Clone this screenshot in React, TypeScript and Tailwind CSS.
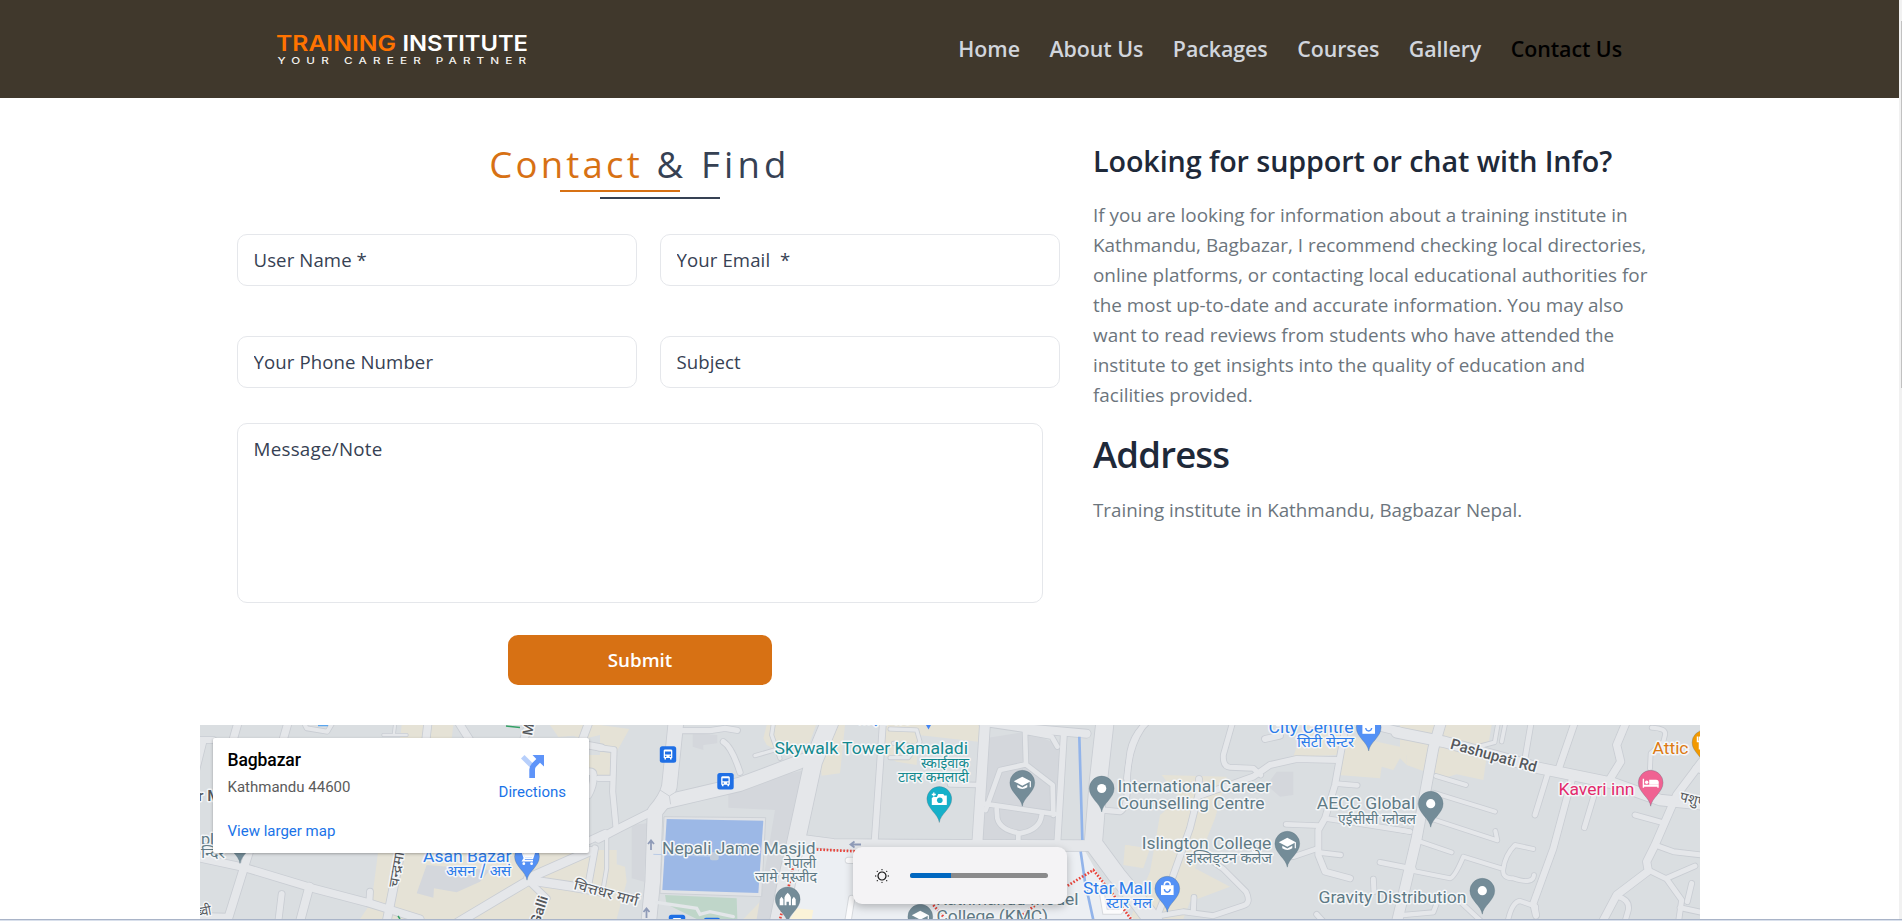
import React from "react";

type Road = [origin: number, d: string, width: number];

// Street geometry is stored per map tile, at three units to the pixel.
const roads: Road[] = [
  [200, "M0 75L40 75M10 80L-20 200", 18],
  [200, "M112 30L100 72M262 30L250 72M683 30L678 72M778 26L812 80M987 26L972 72M1165 26L1148 72", 22],
  [200, "M315 30L320 40L382 50L395 28", 12],
  [200, "M585 30L582 54M550 60L620 60", 7],
  [200, "M1150 88L1205 98M1155 172Q1180 165 1180 180Q1182 210 1165 240M1150 385L1215 355", 20],
  [200, "M-5 428L135 458L340 520L500 562L660 612", 22],
  [200, "M150 400L84 612M328 515L300 620M604 400L560 620", 24],
  [200, "M0 603L85 605M245 537L235 620M510 530L508 562", 18],
  [200, "M985 497L770 625M985 490L1170 408M985 495L1100 512L1210 530", 26],
  [200, "M985 497L1040 550M1185 400L1165 510", 18],
  [600, "M228 20L208 215Q200 250 165 290L158 500L146 625", 44],
  [600, "M190 262L300 236L420 208L600 140L650 125", 40],
  [600, "M-5 372L60 338L160 288", 22],
  [600, "M-5 98L42 104L38 230L48 335M-5 190L35 190", 16],
  [600, "M240 47L330 47L375 40L412 46M370 80Q395 95 420 172", 16],
  [600, "M520 26L515 60L540 130M465 122L540 100", 10],
  [600, "M690 20L640 140L588 380L560 500L535 625", 52],
  [600, "M849 20L824 380", 18],
  [600, "M590 374L700 388L900 390L1480 392", 32],
  [600, "M20 365L20 460L8 530", 10],
  [840, "M435 25L412 385", 30],
  [840, "M672 50L652 385", 18],
  [840, "M330 208L415 210M555 50L558 148L480 165L437 285M555 50L635 65L652 95M560 150L638 210L640 300M425 265L645 297M470 282L472 310Q480 345 540 355Q600 345 605 300M535 355L535 385", 14],
  [840, "M425 20L560 40L740 56", 24],
  [840, "M795 20L775 200L760 385L830 480L900 565L945 625", 52],
  [840, "M785 285L840 290Q865 280 862 190Q865 100 905 40", 16],
  [840, "M150 42L230 45L240 80L205 128L150 128M160 85L215 92", 10],
  [1080, "M198 25Q160 60 150 110L140 190", 16],
  [1080, "M457 25L430 120Q428 155 450 157L520 160L542 180", 15],
  [1080, "M365 240L520 185L570 150L650 132L775 135", 18],
  [1080, "M357 192L355 240L330 340L280 480L225 620M555 72L600 62", 18],
  [1080, "M792 60L765 210L735 310L715 345L715 420L735 470L810 490", 18],
  [1080, "M770 206L832 211M618 328L718 332M640 425L715 400M715 412L782 420M735 310L800 320L990 350", 14],
  [1080, "M370 420L430 462L498 530Q515 565 490 572L400 602L310 590L220 605M342 547L340 590", 15],
  [1080, "M900 442L1000 462M880 492L882 530M710 598L730 620", 15],
  [1080, "M880 30L960 50", 24],
  [1400, "M-10 52L130 80L420 160L640 205L780 255L905 268", 32],
  [1400, "M122 25L100 100L50 370L10 540L-10 625", 30],
  [1400, "M294 25L284 82L235 95M316 25L305 80", 11],
  [1400, "M393 25L375 130M442 180L405 300M590 215L553 338", 15],
  [1400, "M525 20L475 165M515 195L460 400L400 565L408 600", 19],
  [1400, "M677 25L650 90L662 140L628 195", 22],
  [1400, "M755 38Q800 40 795 60L790 80L752 115L750 160", 12],
  [1400, "M905 140L830 240L765 390L740 440L745 468L650 540L605 625", 22],
  [1400, "M885 160L905 168M705 300L785 322M765 390L820 410L905 420M745 465L800 492L845 555L835 625M800 490L885 453M875 505L862 560M840 578L905 592M655 545Q690 555 685 585L675 620", 15],
  [1400, "M108 183L198 210M100 233L285 290M90 310L292 376L286 348M55 378L155 412M25 465L150 490Q165 485 190 425L310 462Q315 420 345 390L400 402M310 462Q305 490 340 490Q400 510 402 480", 12],
  [1400, "M322 625Q335 560 360 558L408 575L408 605M170 550L250 625M10 600L100 592L112 560M-10 343L30 350", 13],
];

const beige: [number, string][] = [
  [200, "M605 30H760L755 72H600ZM1050 30H1200V60L1150 72L1120 62L1075 66ZM1160 120H1200V185L1160 165Z"],
  [200, "M535 405L515 560L480 612H1250V405Z"],
  [600, "M0 30L88 42L50 110L0 90ZM0 110L40 115L30 180L0 180ZM25 440L75 455L80 500L50 612L0 612V470Z"],
  [600, "M500 30H648L630 80L560 120L500 90L490 70ZM700 30H735L720 175L665 182L660 130ZM520 340L500 540L430 612H540Z"],
  [840, "M130 30H420L415 80L235 60L230 150L170 140L130 120ZM0 30H10L0 160ZM860 390L910 400V455L855 445Z"],
  [1080, "M245 180L440 185L405 310L345 460L450 515L330 560L310 612H150L210 470L240 300L300 250ZM135 390L210 400L190 460L130 450Z"],
  [1080, "M670 30H800L770 120L640 125ZM800 60L980 100V150L960 130L940 165L905 155L900 190L775 180Z"],
  [1400, "M0 30H275L265 90L250 195L170 178L130 190L20 150V120L0 120Z"],
];

const shade: [number, string][] = [
  [200, "M680 450L870 465L840 500L770 532L702 520L700 548L650 535Z"],
  [600, "M385 215L640 160L610 300L520 612H470L525 285L385 278ZM278 55L352 60V85L310 90V105L278 95ZM95 330L142 325L132 500L95 490Z"],
  [840, "M435 70L560 50L660 90L650 380H420Z"],
  [1080, "M590 170H640V240L600 245L560 210Z"],
];

const DEVA = "'Noto Sans Devanagari','Noto Sans','Lohit Devanagari',sans-serif";

type Label = {
  t: string; x: number; y: number; w: number; c: string;
  s?: number; r?: number; deva?: boolean; bold?: boolean;
};
const slate = "#5f7a85";
const teal = "#13898e";
const blue = "#2b7bea";
const gray = "#55585c";
const labels: Label[] = [
  { t: "Skywalk Tower Kamaladi", x: 774.5, y: 753.7, w: 193.5, c: teal },
  { t: "स्काईवाक", x: 921, y: 767.5, w: 48, c: teal, deva: true },
  { t: "टावर कमलादी", x: 898, y: 781.5, w: 71, c: teal, deva: true },
  { t: "Nepali Jame Masjid", x: 662, y: 854.3, w: 153.5, c: slate },
  { t: "नेपाली", x: 784, y: 868, w: 32, c: slate, deva: true },
  { t: "जामे मस्जीद", x: 755, y: 882, w: 62, c: slate, deva: true },
  { t: "International Career", x: 1117.5, y: 791.7, w: 153.5, c: slate },
  { t: "Counselling Centre", x: 1117.5, y: 809.3, w: 147, c: slate },
  { t: "City Centre", x: 1268.5, y: 732.7, w: 85, c: blue },
  { t: "सिटी सेन्टर", x: 1297, y: 746.5, w: 57, c: blue, deva: true },
  { t: "AECC Global", x: 1316.7, y: 809.3, w: 98.5, c: slate },
  { t: "एईसीसी ग्लोबल", x: 1338, y: 823.5, w: 78, c: slate, deva: true },
  { t: "Islington College", x: 1141.8, y: 849, w: 129.5, c: slate },
  { t: "इस्लिङ्टन कलेज", x: 1186, y: 862.7, w: 86, c: slate, deva: true },
  { t: "Star Mall", x: 1083, y: 894, w: 68.7, c: blue },
  { t: "स्टार मल", x: 1106, y: 908, w: 46, c: blue, deva: true },
  { t: "Gravity Distribution", x: 1318.5, y: 902.7, w: 148, c: slate },
  { t: "Attic", x: 1652.5, y: 753.7, w: 36, c: "#dd7a12" },
  { t: "Kaveri inn", x: 1558.5, y: 795, w: 76, c: "#e32a6c" },
  { t: "Asan Bazar", x: 423, y: 861.7, w: 88.5, c: blue },
  { t: "असन / असं", x: 446, y: 875.5, w: 65, c: blue, deva: true },
  { t: "Kathmandu Model", x: 936, y: 905.3, w: 142.5, c: slate },
  { t: "College (KMC)", x: 936.5, y: 922.3, w: 111.5, c: slate },
  { t: "pl", x: 201, y: 844.5, w: 13, c: slate },
  { t: "न्दिर", x: 201, y: 858, w: 24, c: slate, deva: true },
  { t: "साइनबोर्ड", x: 855, y: 724, w: 57, c: blue, deva: true },
  { t: "r M", x: 198, y: 801, w: 23, c: gray, s: 15, bold: true },
  { t: "M", x: 532, y: 736, w: 12, c: gray, s: 14, r: -80, bold: true },
  { t: "Pashupati Rd", x: 1449.5, y: 748.5, w: 89, c: gray, s: 15, r: 15.5, bold: true },
  { t: "पशुपति", x: 1679, y: 801, w: 38, c: gray, s: 14, r: 14, deva: true },
  { t: "चित्तधर मार्ग", x: 573, y: 889, w: 66, c: gray, s: 14, r: 15, deva: true },
  { t: "चन्द्रमा", x: 398, y: 888, w: 36, c: gray, s: 14, r: -80, deva: true },
  { t: "Galli", x: 539, y: 926, w: 30, c: gray, s: 14, r: -72, bold: true },
  { t: "ब्वी", x: 198, y: 917, w: 14, c: gray, s: 14, r: -10, deva: true },
];

const pinGray = "#748c98";
type Kind = "dot" | "grad" | "camera" | "bag" | "bed" | "cart" | "mosque" | "fork";
const pins: [number, number, string, Kind][] = [
  [939.3, 799, "#16b0c9", "camera"],
  [1022.3, 782.7, pinGray, "grad"],
  [1101.7, 788.5, pinGray, "dot"],
  [1287.3, 843.7, pinGray, "grad"],
  [1368.7, 727.5, "#5491f5", "bag"],
  [1167.3, 888.7, "#5491f5", "bag"],
  [1430.7, 803.7, pinGray, "dot"],
  [1482.3, 890.7, pinGray, "dot"],
  [1650.7, 782.7, "#f06292", "bed"],
  [1704.5, 742.5, "#f29900", "fork"],
  [527, 856.7, "#5491f5", "cart"],
  [787.7, 899.3, pinGray, "mosque"],
  [920.3, 916.7, pinGray, "grad"],
  [240, 840, pinGray, "dot"],
];

function Glyph({ kind }: { kind: Kind }) {
  switch (kind) {
    case "dot":
      return <circle r="4.6" fill="#fff" />;
    case "grad":
      return (
        <g fill="#fff">
          <path d="M-8.5 -1.5L0 -6L8.5 -1.5L0 3Z" />
          <path d="M-5 2V4.6Q0 8 5 4.6V2L0 4.7Z" />
          <path d="M7.4 -1.5H8.6V4.5H7.4Z" />
        </g>
      );
    case "camera":
      return (
        <g>
          <path d="M-6 -2H-2.5L-1 -5H4L5 -3.5H7.5V6H-7.5V-1Z" fill="#fff" />
          <circle cx=".5" cy="1.3" r="2.8" fill="#16b0c9" />
          <path d="M-5.5 -6.5V-2.5M-7.5 -4.5H-3.5" stroke="#fff" strokeWidth="1.3" />
        </g>
      );
    case "bag":
      return (
        <g>
          <path d="M-6.3 -3.5H6.3V6.3H-6.3Z" fill="#fff" />
          <path d="M-3 -3.5Q-3 -7 0 -7T3 -3.5" fill="none" stroke="#fff" strokeWidth="1.6" />
          <path d="M-3 0.5Q-2.5 3.5 0 3.5T3 0.5" fill="none" stroke="#5491f5" strokeWidth="1.4" />
        </g>
      );
    case "bed":
      return (
        <g fill="#fff">
          <path d="M-8 -4H-6.6V2H8V5H6.6V4H-6.6V5H-8Z" />
          <circle cx="-4" cy="-.5" r="1.7" />
          <path d="M-1.5 -3H5.5Q8 -3 8 -.5V2H-1.5Z" />
        </g>
      );
    case "cart":
      return (
        <g>
          <path d="M-8 -7H-5.5L-2.5 1.5H5.5L7.5 -4.5H-4.3M-2.5 1.5L-4 4H6" fill="none" stroke="#fff" strokeWidth="1.7" />
          <path d="M-4 -4.5H7.5L5.5 .5H-2.5Z" fill="#fff" />
          <circle cx="-3.2" cy="7" r="1.4" fill="#fff" />
          <circle cx="4.6" cy="7" r="1.4" fill="#fff" />
        </g>
      );
    case "mosque":
      return (
        <g fill="#fff">
          <path d="M-3.2 6V-2Q-2.8 -4 0 -6.5Q2.8 -4 3.2 -2V6H1.2V2.5H-1.2V6Z" />
          <path d="M-8 6V0L-6.2 -2.5L-4.3 0V6ZM4.3 6V0L6.2 -2.5L8 0V6Z" />
        </g>
      );
    case "fork":
      return <path d="M-7 -6V-1H-3V-6M-5 -6V7" fill="none" stroke="#fff" strokeWidth="1.5" />;
  }
}

const tile = (origin: number) => `translate(${origin} 715) scale(.33333)`;

function CityMap() {
  return (
    <svg className="block h-[194px] w-[1500px]" viewBox="200 725 1500 194">
      <rect x="200" y="725" width="1500" height="194" fill="#dadee1" />
      {beige.map(([o, d], i) => (
        <path key={i} d={d} transform={tile(o)} fill="#e5e2d6" />
      ))}
      {shade.map(([o, d], i) => (
        <path key={i} d={d} transform={tile(o)} fill="#d4d7dc" />
      ))}
      <g transform={tile(600)}>
        <path d="M195 540L410 550L412 612H290L200 568Z" fill="#bfd6c9" />
        <path d="M570 400L830 408H1455L1490 470L1600 612H530Z" fill="#eceff3" />
        <path d="M590 580L640 585L635 612H570Z" fill="#fbf3d8" />
      </g>
      <g fill="none" stroke="#c9cdd3" strokeLinecap="round" strokeLinejoin="round">
        {roads.map(([o, d, w], i) => (
          <path key={i} d={d} transform={tile(o)} strokeWidth={w + 5} />
        ))}
      </g>
      <g fill="none" stroke="#e5e7ea" strokeLinecap="round" strokeLinejoin="round">
        {roads.map(([o, d, w], i) => (
          <path key={i} d={d} transform={tile(o)} strokeWidth={w} />
        ))}
      </g>
      <g transform={tile(600)}>
        <path d="M192 305L497 308L485 545L180 535Z" fill="#e1e3e6" stroke="#cdd1d6" strokeWidth="3" />
        <path d="M200 312L490 317L475 534L187 525Z" fill="#9cb8e6" />
        <path d="M160 418L345 424" stroke="#b9cbe6" strokeWidth="3" />
        <rect x="330" y="412" width="26" height="24" rx="6" fill="#c2cdda" />
        <path d="M180 225L208 243L232 228M208 243L212 268" fill="none" stroke="#cdd1d6" strokeWidth="3" />
        <path d="M170 562L290 580L300 598L330 590L400 605" fill="none" stroke="#e3e6e9" strokeWidth="10" strokeLinecap="round" />
        <path d="M745 436H770M755 550L745 612" fill="none" stroke="#d7dade" strokeWidth="22" strokeLinecap="round" />
        <path d="M745 436H770M755 550L745 612" fill="none" stroke="#fbfbfc" strokeWidth="16" strokeLinecap="round" />
      </g>
      <g transform={tile(840)} fill="none">
        <path d="M718 65L727 375M722 410L735 500L760 615" stroke="#92b4ea" strokeWidth="8" />
        <path d="M780 500L795 590L840 590L860 570" stroke="#d7dade" strokeWidth="18" />
        <path d="M780 500L795 590L840 590L860 570" stroke="#fbfbfc" strokeWidth="12" />
        <path d="M-80 403L50 409M683 512L760 465L820 540L875 615M280 570L310 605M600 560L540 605" stroke="#e8453c" strokeWidth="8" strokeDasharray="5 5" />
        <path d="M-140 450L-155 520L-180 612" stroke="#e8453c" strokeWidth="8" strokeDasharray="5 5" />
      </g>
      <g fill="none" stroke="#8f9bb8" strokeWidth="1.8">
        <path d="M651 850V841M648 844L651 840.5L654 844M646.5 918V909M643.5 912L646.5 908.5L649.5 912" />
        <path d="M861 844.5H851M854.5 841.5L850.5 844.5L854.5 847.5" />
      </g>
      <path d="M506 726L520 727.5M398 916L400 919" stroke="#34a065" strokeWidth="1.5" />
      <path d="M318 725.5H328" stroke="#5aa5ee" strokeWidth="1.5" />
      <path d="M926 725H931L928.5 729.5Z" fill="#4285f4" />
      {[[668, 754.5], [725.5, 781.3], [677, 923], [712, 926]].map(([x, y]) => (
        <g key={x} transform={`translate(${x} ${y})`}>
          <rect x="-8.2" y="-8.2" width="16.4" height="16.4" rx="2.5" fill="#1f6fe5" />
          <path d="M-4.3 -4Q-4 -5 -3 -5H3Q4 -5 4.3 -4V3.5H3.6V5H2V3.5H-2V5H-3.6V3.5H-4.3Z" fill="#fff" />
          <path d="M-3 -3H3V0H-3Z" fill="#1f6fe5" />
          <path d="M-3 1.3H-1.6V2.4H-3ZM1.6 1.3H3V2.4H1.6Z" fill="#1f6fe5" />
        </g>
      ))}
      {pins.map(([x, y, c, kind], i) => (
        <g key={i} transform={`translate(${x} ${y})`}>
          <path d="M0 23.5C-1 15 -12.4 9.5 -12.4 0A12.4 12.4 0 0 1 12.4 0C12.4 9.5 1 15 0 23.5Z" fill={c} stroke="#56707b" strokeOpacity=".45" strokeWidth=".7" />
          <Glyph kind={kind} />
        </g>
      ))}
      {labels.map((l, i) => (
        <text
          key={i}
          x={l.x}
          y={l.y}
          fill={l.c}
          fontSize={l.s ?? (l.deva ? 14 : 17)}
          fontWeight={l.bold ? 500 : 400}
          fontFamily={l.deva ? DEVA : "Roboto,sans-serif"}
          textLength={l.w}
          lengthAdjust="spacingAndGlyphs"
          transform={l.r ? `rotate(${l.r} ${l.x} ${l.y})` : undefined}
          stroke="#f4f6f8"
          strokeWidth="3"
          strokeLinejoin="round"
          paintOrder="stroke"
        >
          {l.t}
        </text>
      ))}
    </svg>
  );
}

function Logo() {
  return (
    <svg className="h-[34px] w-[256px]" viewBox="276 31.5 256 34" fontFamily="Inter,sans-serif">
      <text x="276" y="50.3" fontSize="21.3" fontWeight="600" fill="#ff7300" textLength="120" lengthAdjust="spacingAndGlyphs">TRAINING</text>
      <text x="402.5" y="50.3" fontSize="21.3" fontWeight="600" fill="#fff" textLength="125.5" lengthAdjust="spacingAndGlyphs">INSTITUTE</text>
      <g transform="translate(277.5 63) scale(1.3 1)" fontSize="9" fontWeight="500" fill="#f4f2ee">
        <text textLength="39.4" lengthAdjust="spacing">YOUR</text>
        <text x="51.2" textLength="59" lengthAdjust="spacing">CAREER</text>
        <text x="121.8" textLength="69.4" lengthAdjust="spacing">PARTNER</text>
      </g>
    </svg>
  );
}

const field =
  "h-[52px] rounded-[10px] border border-gray-200 px-[15.5px] pb-[2px] text-[18.6px] tracking-[0.1px] text-gray-700 placeholder:text-gray-700 outline-none";

export default function App() {
  return (
    <div className="flex h-[921px] w-[1902px] flex-col overflow-hidden bg-white font-['Open_Sans',sans-serif]">
      <div className="flex h-[919px]">
        <div className="flex w-[1899px] flex-col">
          <header className="flex h-[98px] shrink-0 items-center justify-between bg-[#40382c] pr-[277px] pl-[276px]">
            <Logo />
            <nav className="flex gap-[29.5px] text-[21.4px] leading-[30px] font-semibold tracking-[-0.07px] whitespace-nowrap text-gray-300">
              <a>Home</a>
              <a>About Us</a>
              <a>Packages</a>
              <a>Courses</a>
              <a>Gallery</a>
              <a className="text-black">Contact Us</a>
            </nav>
          </header>
          <main className="flex h-[627px] shrink-0 pl-[237px]">
            <section className="flex w-[823px] flex-col">
              <div className="flex h-[136px] flex-col pt-[40px]">
                <h1 className="flex h-[52px] w-[806px] items-center justify-center text-[36.5px] font-normal tracking-[4.2px] whitespace-pre text-gray-700">
                  <span className="tracking-[3.2px] text-[#d77114]">Contact</span> &amp; Find
                </h1>
                <div className="ml-[323px] h-[2px] w-[120px] bg-[#d77114]" />
                <div className="mt-[5px] ml-[363px] h-[2px] w-[120px] bg-gray-700" />
              </div>
              <div className="grid grid-cols-[400px_400px] gap-x-[23px] gap-y-[50px]">
                <input className={field} placeholder="User Name *" />
                <input className={field} placeholder="Your Email  *" />
                <input className={field} placeholder="Your Phone Number" />
                <input className={field} placeholder="Subject" />
              </div>
              <textarea
                className="mt-[35px] h-[180px] w-[806px] resize-none rounded-[10px] border border-gray-200 px-[15.5px] py-[10px] text-[18.8px] leading-[30px] tracking-[0.25px] text-gray-700 outline-none placeholder:text-gray-700"
                placeholder="Message/Note"
              />
              <button className="mt-[32px] ml-[271px] h-[50px] w-[264px] rounded-[10px] bg-[#d77114] text-[18.8px] font-semibold text-white">
                Submit
              </button>
            </section>
            <section className="ml-[33px] w-[580px] pt-[43px] text-[#6c757d]">
              <h2 className="text-[28.7px] leading-[40px] font-semibold tracking-[-0.09px] whitespace-nowrap text-gray-800">
                Looking for support or chat with Info?
              </h2>
              <p className="mt-[19px] text-[18.9px] leading-[30px] whitespace-nowrap">
                If you are looking for information about a training institute in<br />
                Kathmandu, Bagbazar, I recommend checking local directories,<br />
                online platforms, or contacting local educational authorities for<br />
                the most up-to-date and accurate information. You may also<br />
                want to read reviews from students who have attended the<br />
                institute to get insights into the quality of education and<br />
                facilities provided.
              </p>
              <h2 className="mt-[19px] text-[36.5px] leading-[50px] font-semibold tracking-[-0.8px] text-gray-800">Address</h2>
              <p className="mt-[16px] text-[18.8px] leading-[30px]">Training institute in Kathmandu, Bagbazar Nepal.</p>
            </section>
          </main>
          <div className="relative ml-[200px] w-[1500px] font-[Roboto,sans-serif]">
            <CityMap />
            <div className="absolute top-[13px] left-[13px] flex h-[115px] w-[376px] justify-between rounded-[2px] bg-white pr-[23px] pl-[14.5px] shadow-[0_1px_3px_rgba(0,0,0,0.3)]">
              <div className="flex flex-col pt-[12px]">
                <div className="text-[17.5px] leading-[20px] font-medium tracking-[-0.1px] text-black">Bagbazar</div>
                <div className="mt-[8px] text-[15px] leading-[18px] text-[#5b5b5b]">Kathmandu 44600</div>
                <div className="mt-[26px] text-[15px] leading-[18px] text-[#1a73e8]">View larger map</div>
              </div>
              <div className="flex flex-col items-center pt-[17px]">
                <svg className="h-[23px] w-[23px]" viewBox="0 0 23 23">
                  <path d="M0 3.5L3.5 0L11.5 8L8.5 12Z" fill="#b7cffb" />
                  <path d="M8.3 23V14.5Q8.3 11 11 8.3L15.3 4L11.5 0H23V11.5L19 7.7L14.8 12Q14 13 14 14.8V23Z" fill="#5e94f9" />
                </svg>
                <div className="mt-[5px] text-[15px] leading-[18px] text-[#1a73e8]">Directions</div>
              </div>
            </div>
            <div className="absolute top-[122px] left-[653px] flex h-[57px] w-[214px] items-center rounded-[9px] bg-[#f4f3f5] pl-[22px] shadow-[0_3px_8px_rgba(0,0,0,0.25)]">
              <svg className="h-[14px] w-[14px]" viewBox="-7 -7 14 14">
                <circle r="4" fill="none" stroke="#111" strokeWidth="1.2" />
                <g fill="#111">
                  {[[0, -6.3], [0, 6.3], [6.3, 0], [-6.3, 0], [4.7, 4.7], [-4.7, 4.7], [4.7, -4.7], [-4.7, -4.7]].map(([x, y]) => (
                    <circle key={`${x},${y}`} cx={x} cy={y} r=".65" />
                  ))}
                </g>
              </svg>
              <div className="ml-[21px] h-[5px] w-[138px] overflow-hidden rounded-full bg-[#8a8a8b]">
                <div className="h-full w-[41px] bg-[#0067c0]" />
              </div>
            </div>
          </div>
        </div>
        <div className="w-[3px] bg-[#f1f1f1] pt-[21px] pl-[2px]">
          <div className="h-[367px] bg-[#c1c1c1]" />
        </div>
      </div>
      <div className="h-[2px] border-t border-[#a9b4c8] bg-[#d9e0ec]" />
    </div>
  );
}
